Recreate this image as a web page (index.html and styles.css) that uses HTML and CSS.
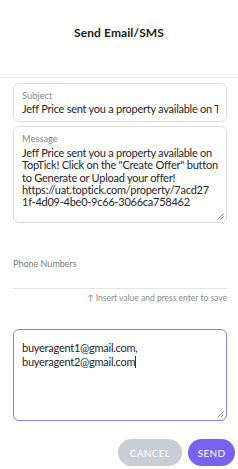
FILE: index.html
```html
<!DOCTYPE html>
<html>
<head>
<meta charset="utf-8">
<link rel="stylesheet" href="styles.css">
</head>
<body>
<div class="dialog">
  <header class="header"><h1 class="title">Send Email/SMS</h1></header>
  <div class="form">
    <div class="field subject">
      <div class="label">Subject</div>
      <div class="value single">Jeff Price sent you a property available on TopTick!</div>
    </div>
    <div class="field message">
      <div class="label">Message</div>
      <div class="value multi">Jeff Price sent you a property available on<br>TopTick! Click on the "Create Offer" button<br>to Generate or Upload your offer!<br>https://uat.toptick.com/property/7acd27<br>1f-4d09-4be0-9c66-3066ca758462</div>
      <svg class="grip" width="8" height="8" viewBox="0 0 8 8"><path d="M7.5 1.5 L1.5 7.5 M7.5 4.5 L4.5 7.5" stroke="#8a8a8a" stroke-width="1" fill="none"/></svg>
    </div>
    <div class="phone">
      <div class="phone-label">Phone Numbers</div>
      <div class="phone-line"></div>
      <div class="hint">↑ Insert value and press enter to save</div>
    </div>
    <div class="field emails">
      <div class="value multi">buyeragent1@gmail.com,<br>buyeragent2@gmail.com<span class="caret"></span></div>
      <svg class="grip" width="8" height="8" viewBox="0 0 8 8"><path d="M7.5 1.5 L1.5 7.5 M7.5 4.5 L4.5 7.5" stroke="#8a8a8a" stroke-width="1" fill="none"/></svg>
    </div>
    <div class="actions">
      <button class="btn cancel">CANCEL</button>
      <button class="btn send">SEND</button>
    </div>
  </div>
</div>
</body>
</html>
```
FILE: styles.css
```css
* { box-sizing: border-box; }
html, body { margin: 0; padding: 0; background: #fff; }
body { font-family: Lato, "Noto Sans", sans-serif; color: #333; width: 238px; }
.header { height: 78px; border-bottom: 1px solid #e8e8e8; padding-top: 25px; }
.title { margin: 0; text-align: center; font-size: 12px; line-height: 16px; font-weight: 700; color: #1a1a1a; letter-spacing: 0.1px; }
.form { padding: 5px 11px 0 13px; display: flex; flex-direction: column; }
.field { position: relative; border: 1px solid #dcdcdc; border-radius: 6px; padding: 5px 8px 0 8px; }
.label { font-size: 9.3px; line-height: 13px; color: #8a8a8a; }
.value { font-size: 11px; line-height: 14.5px; color: #262626; letter-spacing: -0.25px; }
.single { white-space: nowrap; overflow: hidden; }
.subject { height: 39px; }
.message { margin-top: 4px; height: 97px; }
.message .multi { white-space: nowrap; margin-top: 2px; line-height: 12.3px; }
.grip { position: absolute; right: 2px; bottom: 2px; }
.phone { margin-top: 34px; display: flex; flex-direction: column; }
.phone-label { font-size: 9px; line-height: 13px; color: #7a7a7a; }
.phone-line { margin-top: 18px; height: 1px; background: #e2e2e2; }
.hint { margin-top: 3px; text-align: right; font-size: 8.5px; line-height: 12px; color: #8a8a8a; }
.emails { margin-top: 25px; height: 92px; border: 1.5px solid #8b7cf4; padding: 11px 8px 0 8px; }
.emails .multi { line-height: 14px; white-space: nowrap; }
.caret { display: inline-block; width: 1px; height: 12px; background: #333; vertical-align: -2px; }
.actions { display: flex; justify-content: flex-end; gap: 6px; margin-top: 18px; margin-right: -8px; }
.btn { border: none; height: 27px; border-radius: 14px; font-family: inherit; font-size: 10px; font-weight: 400; color: #fff; letter-spacing: 0.3px; padding: 0; }
.cancel { width: 64px; background: #c9cdd5; }
.send { width: 47px; background: #7b61f0; }
```
